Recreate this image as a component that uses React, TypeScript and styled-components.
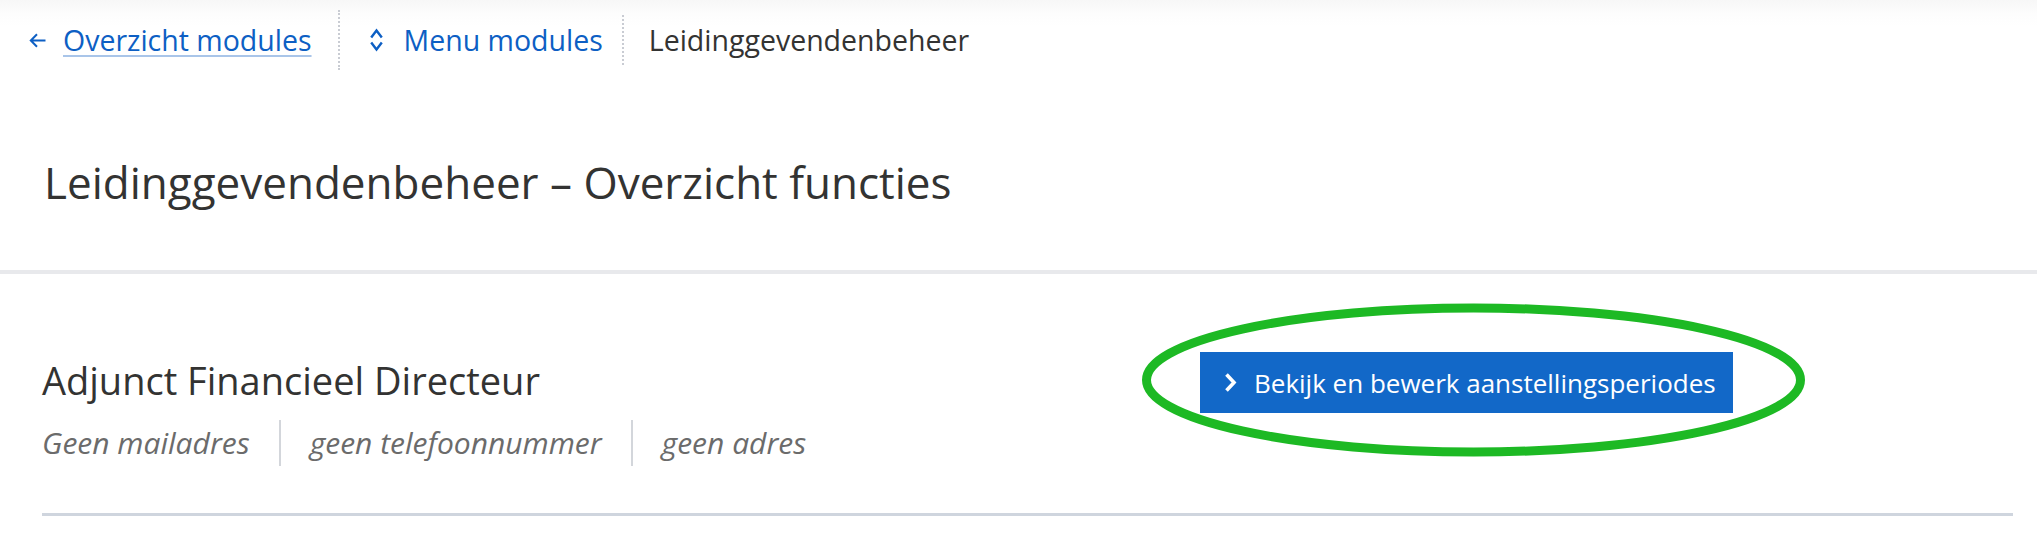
import React from "react";
import styled, { createGlobalStyle } from "styled-components";

const GlobalStyle = createGlobalStyle`
  html, body {
    margin: 0;
    padding: 0;
    background: #fff;
  }
  body {
    font-family: "Open Sans", "Noto Sans", sans-serif;
    color: #333332;
  }
`;

const Page = styled.div`
  width: 100%;
  min-height: 560px;
  background: #fff;
`;

/* breadcrumb / top navigation */
const TopBar = styled.nav`
  height: 80px;
  display: flex;
  align-items: center;
  padding-left: 29px;
  background: linear-gradient(#f7f7f7 0, #fdfdfd 14px, #fff 26px);
`;

const Crumb = styled.div<{ $pl?: number; $pr?: number; $gap?: number }>`
  display: flex;
  align-items: center;
  gap: ${(p) => p.$gap ?? 16}px;
  padding-left: ${(p) => p.$pl ?? 0}px;
  padding-right: ${(p) => p.$pr ?? 0}px;
  font-size: 28.5px;
  line-height: 1;
  color: #333332;
`;

const CrumbLink = styled.a<{ $underline?: boolean }>`
  color: #0d5fc4;
  text-decoration: ${(p) => (p.$underline ? "underline" : "none")};
  text-decoration-color: #a9c5e9;
  text-decoration-thickness: 2px;
  text-underline-offset: 4px;
  cursor: pointer;
`;

const Divider = styled.span<{ $h: number }>`
  width: 0;
  height: ${(p) => p.$h}px;
  border-left: 2px dotted #c9ccd3;
`;

/* page header */
const Header = styled.header`
  padding: 74px 0 60px 44px;
  border-bottom: 4px solid #e8e9ec;
`;

const Title = styled.h1`
  margin: 0;
  font-size: 44px;
  font-weight: 400;
  line-height: 56px;
  color: #333332;
`;

/* function row */
const Row = styled.section`
  display: grid;
  grid-template-columns: 997px 1fr;
  margin: 0 24px 0 42px;
  border-bottom: 3px solid #cfd5de;
`;

const Info = styled.div`
  padding: 82px 0 47px;
  display: flex;
  flex-direction: column;
  gap: 16px;
`;

const Name = styled.h2`
  margin: 0;
  font-size: 38px;
  font-weight: 400;
  line-height: 48px;
  color: #333332;
`;

const Meta = styled.ul`
  margin: 0;
  padding: 0;
  list-style: none;
  display: flex;
`;

const MetaItem = styled.li`
  font-size: 30px;
  font-style: italic;
  line-height: 46px;
  color: #6b6b6b;
  padding: 0 29px;
  border-left: 2px solid #d3d6db;

  &:first-child {
    padding-left: 0;
    border-left: none;
  }
`;

const Actions = styled.div`
  padding: 78px 0 0 161px;
`;

const ButtonWrap = styled.div`
  position: relative;
  display: inline-block;
`;

const Button = styled.button`
  height: 61px;
  display: inline-flex;
  align-items: center;
  gap: 17px;
  padding: 0 17px 0 24px;
  border: none;
  border-radius: 0;
  background: #1268c8;
  color: #fff;
  font-family: "Open Sans", "Noto Sans", sans-serif;
  font-size: 26px;
  cursor: pointer;
`;

/* green annotation drawn over the button */
const Highlight = styled.svg`
  position: absolute;
  left: -59px;
  top: -49px;
  width: 665px;
  height: 154px;
  pointer-events: none;
  overflow: visible;
`;

const ArrowLeft = () => (
  <svg width="17" height="15" viewBox="0 0 17 15" fill="none">
    <path d="M16.5 7.5H1.8M8 1.2L1.8 7.5 8 13.8" stroke="#0d5fc4" strokeWidth="2" />
  </svg>
);

const UpDown = () => (
  <svg width="13" height="24" viewBox="0 0 13 24" fill="none">
    <path
      d="M1.2 9.5L6.5 2.5 11.8 9.5M1.2 14.5L6.5 21.5 11.8 14.5"
      stroke="#0d5fc4"
      strokeWidth="2.4"
    />
  </svg>
);

const ChevronRight = () => (
  <svg width="13" height="21" viewBox="0 0 13 21" fill="none">
    <path d="M2.5 2.5l7.5 8-7.5 8" stroke="#fff" strokeWidth="3.6" />
  </svg>
);

export default function App() {
  return (
    <Page>
      <GlobalStyle />
      <TopBar>
        <Crumb $pr={26} $gap={17}>
          <ArrowLeft />
          <CrumbLink $underline>Overzicht modules</CrumbLink>
        </Crumb>
        <Divider $h={60} />
        <Crumb $pl={30} $pr={19} $gap={21}>
          <UpDown />
          <CrumbLink>Menu modules</CrumbLink>
        </Crumb>
        <Divider $h={50} />
        <Crumb $pl={25}>Leidinggevendenbeheer</Crumb>
      </TopBar>

      <Header>
        <Title>Leidinggevendenbeheer – Overzicht functies</Title>
      </Header>

      <Row>
        <Info>
          <Name>Adjunct Financieel Directeur</Name>
          <Meta>
            <MetaItem>Geen mailadres</MetaItem>
            <MetaItem>geen telefoonnummer</MetaItem>
            <MetaItem>geen adres</MetaItem>
          </Meta>
        </Info>
        <Actions>
          <ButtonWrap>
            <Button>
              <ChevronRight />
              Bekijk en bewerk aanstellingsperiodes
            </Button>
            <Highlight viewBox="0 0 665 154">
              <ellipse
                cx="332.5"
                cy="77"
                rx="327"
                ry="72"
                fill="none"
                stroke="#1db924"
                strokeWidth="9"
              />
            </Highlight>
          </ButtonWrap>
        </Actions>
      </Row>
    </Page>
  );
}
